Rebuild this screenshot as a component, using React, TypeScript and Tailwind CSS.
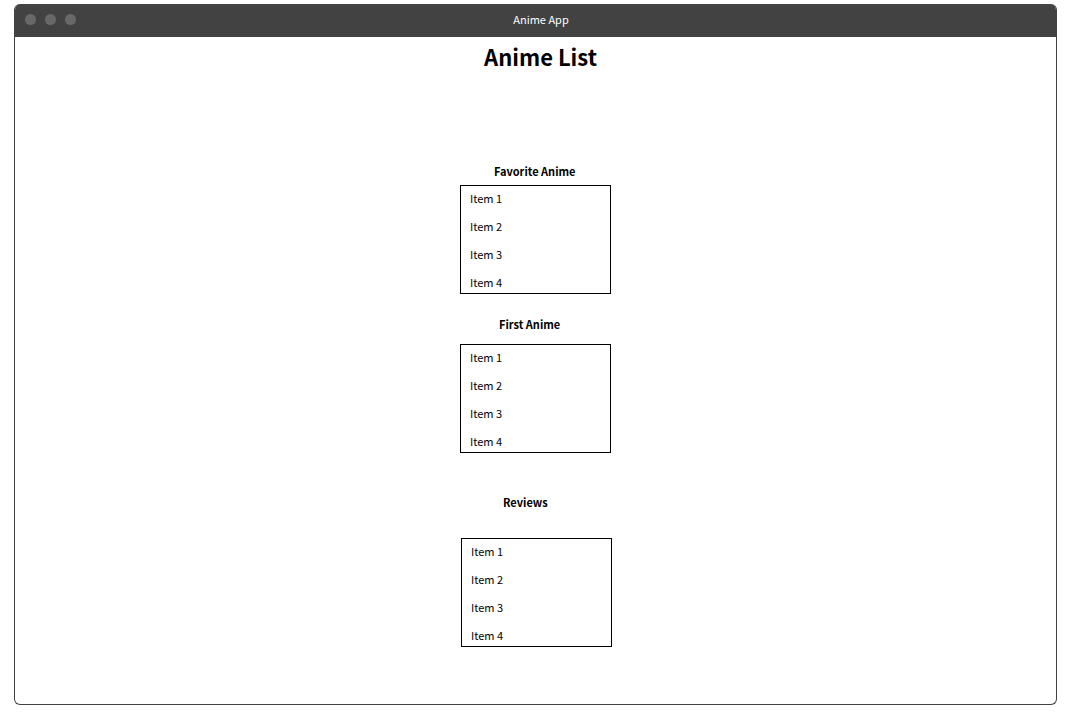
const items = ["Item 1", "Item 2", "Item 3", "Item 4"];

const sections = [
  { title: "Favorite Anime", section: "mt-[88px]", heading: "mb-1.5 pl-[34px]" },
  { title: "First Anime", section: "mt-[22px]", heading: "mb-3 pl-[39px]" },
  { title: "Reviews", section: "mt-[41px] pl-0.5", heading: "mb-7 pl-[42px]" },
];

function TitleBar() {
  return (
    <header className="grid h-[33px] shrink-0 grid-cols-[1fr_auto_1fr] items-center bg-[#424242] pb-[3px]">
      <div className="flex gap-[9px] self-start pt-2.5 pl-2.5" aria-hidden="true">
        <span className="size-[11px] rounded-full bg-[#686868]" />
        <span className="size-[11px] rounded-full bg-[#686868]" />
        <span className="size-[11px] rounded-full bg-[#686868]" />
      </div>
      <span className="pl-[11px] text-white">Anime App</span>
    </header>
  );
}

export default function App() {
  return (
    <div className="flex min-h-screen bg-white pt-1 pr-[11px] pb-3.5 pl-3.5 font-['Noto_Sans_CJK_SC',sans-serif] text-[11px] leading-4 text-black">
      <div className="flex grow flex-col overflow-hidden rounded-md border border-t-0 border-[#424242]">
        <TitleBar />
        <main className="flex flex-col items-center">
          <h1 className="pl-2.5 text-[22px] leading-[38px] font-bold">Anime List</h1>
          {sections.map(({ title, section, heading }) => (
            <section key={title} className={section}>
              <h2 className={`font-bold ${heading}`}>{title}</h2>
              <ul className="flex w-[151px] flex-col gap-3 border border-black px-[9px] pt-1 pb-[3px]">
                {items.map((item) => (
                  <li key={item}>{item}</li>
                ))}
              </ul>
            </section>
          ))}
        </main>
      </div>
    </div>
  );
}
